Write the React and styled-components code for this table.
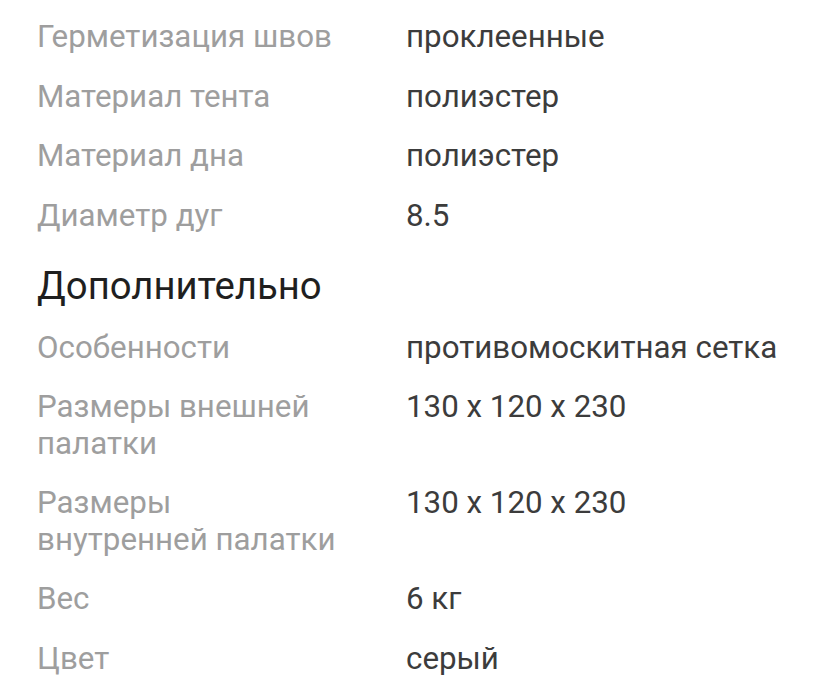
import React from "react";
import styled, { createGlobalStyle } from "styled-components";

const Global = createGlobalStyle`
  html, body { margin: 0; padding: 0; background: #ffffff; }
  body { font-family: Roboto, "Noto Sans", Arial, sans-serif; }
`;

const Page = styled.div`
  width: 840px;
  height: 700px;
  overflow: hidden;
  padding: 19px 0 0 37px;
  box-sizing: border-box;
  background: #fff;
  display: flex;
  flex-direction: column;
`;

const Section = styled.div`
  display: grid;
  grid-template-columns: 306px 1fr;
  column-gap: 63px;
  row-gap: ${(p) => p.$gap}px;
  font-size: 31.3px;
  line-height: ${(p) => p.$lh}px;
`;

const Label = styled.div`
  color: #9e9e9e;
`;

const Value = styled.div`
  color: #3c3c3c;
`;

const Heading = styled.div`
  color: #1f1f1f;
  font-size: 38.3px;
  line-height: 44px;
  margin: 30px 0 22px;
`;

const top = [
  ["Герметизация швов", "проклеенные"],
  ["Материал тента", "полиэстер"],
  ["Материал дна", "полиэстер"],
  ["Диаметр дуг", "8.5"],
];

const extra = [
  ["Особенности", "противомоскитная сетка"],
  ["Размеры внешней палатки", "130 x 120 x 230"],
  ["Размеры внутренней палатки", "130 x 120 x 230"],
  ["Вес", "6 кг"],
  ["Цвет", "серый"],
];

const Rows = ({ items, gap, lh }) => (
  <Section $gap={gap} $lh={lh}>
    {items.map(([l, v]) => (
      <React.Fragment key={l}>
        <Label>{l}</Label>
        <Value>{v}</Value>
      </React.Fragment>
    ))}
  </Section>
);

export default function App() {
  return (
    <>
      <Global />
      <Page>
        <Rows items={top} gap={23.5} lh={36} />
        <Heading>Дополнительно</Heading>
        <Rows items={extra} gap={23} lh={36.5} />
      </Page>
    </>
  );
}
